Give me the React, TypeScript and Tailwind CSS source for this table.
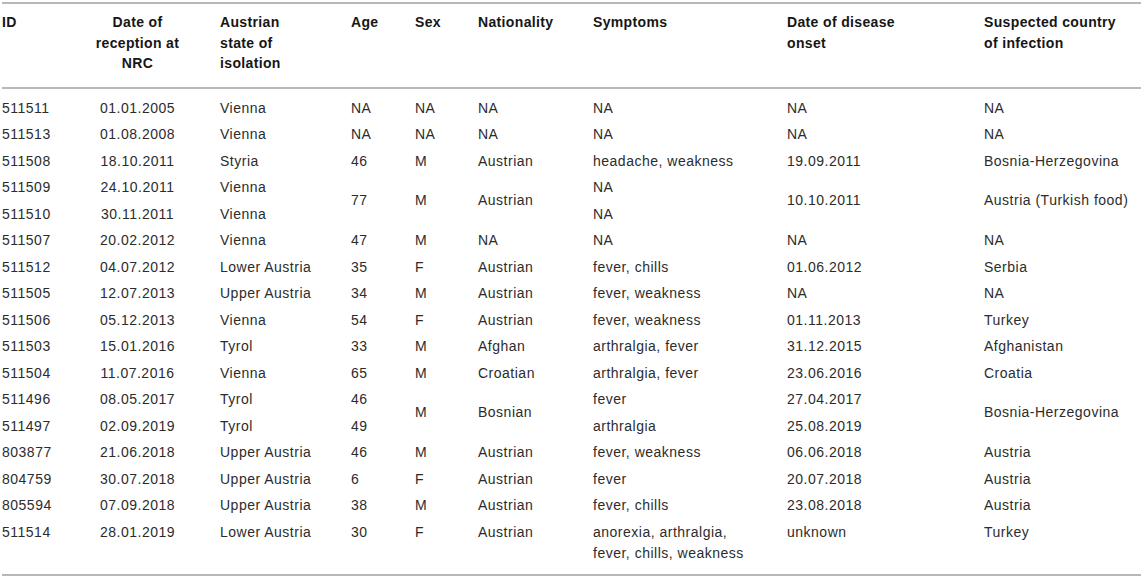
type Cell = { text: string; span?: number } | null;

// null = covered by a rowSpan cell above
const rows: Cell[][] = [
  [{ text: "511511" }, { text: "01.01.2005" }, { text: "Vienna" }, { text: "NA" }, { text: "NA" }, { text: "NA" }, { text: "NA" }, { text: "NA" }, { text: "NA" }],
  [{ text: "511513" }, { text: "01.08.2008" }, { text: "Vienna" }, { text: "NA" }, { text: "NA" }, { text: "NA" }, { text: "NA" }, { text: "NA" }, { text: "NA" }],
  [{ text: "511508" }, { text: "18.10.2011" }, { text: "Styria" }, { text: "46" }, { text: "M" }, { text: "Austrian" }, { text: "headache, weakness" }, { text: "19.09.2011" }, { text: "Bosnia-Herzegovina" }],
  [{ text: "511509" }, { text: "24.10.2011" }, { text: "Vienna" }, { text: "77", span: 2 }, { text: "M", span: 2 }, { text: "Austrian", span: 2 }, { text: "NA" }, { text: "10.10.2011", span: 2 }, { text: "Austria (Turkish food)", span: 2 }],
  [{ text: "511510" }, { text: "30.11.2011" }, { text: "Vienna" }, null, null, null, { text: "NA" }, null, null],
  [{ text: "511507" }, { text: "20.02.2012" }, { text: "Vienna" }, { text: "47" }, { text: "M" }, { text: "NA" }, { text: "NA" }, { text: "NA" }, { text: "NA" }],
  [{ text: "511512" }, { text: "04.07.2012" }, { text: "Lower Austria" }, { text: "35" }, { text: "F" }, { text: "Austrian" }, { text: "fever, chills" }, { text: "01.06.2012" }, { text: "Serbia" }],
  [{ text: "511505" }, { text: "12.07.2013" }, { text: "Upper Austria" }, { text: "34" }, { text: "M" }, { text: "Austrian" }, { text: "fever, weakness" }, { text: "NA" }, { text: "NA" }],
  [{ text: "511506" }, { text: "05.12.2013" }, { text: "Vienna" }, { text: "54" }, { text: "F" }, { text: "Austrian" }, { text: "fever, weakness" }, { text: "01.11.2013" }, { text: "Turkey" }],
  [{ text: "511503" }, { text: "15.01.2016" }, { text: "Tyrol" }, { text: "33" }, { text: "M" }, { text: "Afghan" }, { text: "arthralgia, fever" }, { text: "31.12.2015" }, { text: "Afghanistan" }],
  [{ text: "511504" }, { text: "11.07.2016" }, { text: "Vienna" }, { text: "65" }, { text: "M" }, { text: "Croatian" }, { text: "arthralgia, fever" }, { text: "23.06.2016" }, { text: "Croatia" }],
  [{ text: "511496" }, { text: "08.05.2017" }, { text: "Tyrol" }, { text: "46" }, { text: "M", span: 2 }, { text: "Bosnian", span: 2 }, { text: "fever" }, { text: "27.04.2017" }, { text: "Bosnia-Herzegovina", span: 2 }],
  [{ text: "511497" }, { text: "02.09.2019" }, { text: "Tyrol" }, { text: "49" }, null, null, { text: "arthralgia" }, { text: "25.08.2019" }, null],
  [{ text: "803877" }, { text: "21.06.2018" }, { text: "Upper Austria" }, { text: "46" }, { text: "M" }, { text: "Austrian" }, { text: "fever, weakness" }, { text: "06.06.2018" }, { text: "Austria" }],
  [{ text: "804759" }, { text: "30.07.2018" }, { text: "Upper Austria" }, { text: "6" }, { text: "F" }, { text: "Austrian" }, { text: "fever" }, { text: "20.07.2018" }, { text: "Austria" }],
  [{ text: "805594" }, { text: "07.09.2018" }, { text: "Upper Austria" }, { text: "38" }, { text: "M" }, { text: "Austrian" }, { text: "fever, chills" }, { text: "23.08.2018" }, { text: "Austria" }],
  [{ text: "511514" }, { text: "28.01.2019" }, { text: "Lower Austria" }, { text: "30" }, { text: "F" }, { text: "Austrian" }, { text: "anorexia, arthralgia,\nfever, chills, weakness" }, { text: "unknown" }, { text: "Turkey" }],
];

const widths = [83, 135, 131, 64, 63, 115, 194, 197, 157];

export default function App() {
  const last = rows.length - 1;
  return (
    <div className="min-h-screen bg-white px-[2px] pt-[2px] font-['Liberation_Sans',Arial,sans-serif] text-[14px]">
      <table className="w-[1139px] table-fixed border-collapse border-y-2 border-[#b8b8b8]">
        <colgroup>
          {widths.map((w, i) => (
            <col key={i} style={{ width: w }} />
          ))}
        </colgroup>
        <thead>
          <tr className="border-b-2 border-[#b8b8b8] align-top text-left font-bold tracking-[0.35px] text-[#161616] leading-[20.5px]">
            <th className="pt-2 pb-[13px]">ID</th>
            <th className="pt-2 pb-[13px] pr-[30px] text-center">
              Date of
              <br />
              reception at
              <br />
              NRC
            </th>
            <th className="pt-2 pb-[13px]">
              Austrian
              <br />
              state of
              <br />
              isolation
            </th>
            <th className="pt-2 pb-[13px]">Age</th>
            <th className="pt-2 pb-[13px]">Sex</th>
            <th className="pt-2 pb-[13px]">Nationality</th>
            <th className="pt-2 pb-[13px]">Symptoms</th>
            <th className="pt-2 pb-[13px]">
              Date of disease
              <br />
              onset
            </th>
            <th className="pt-2 pb-[13px]">
              Suspected country
              <br />
              of infection
            </th>
          </tr>
        </thead>
        <tbody className="text-[#2c2c2c] leading-[21.5px] tracking-[0.5px]">
          {rows.map((row, r) => (
            <tr key={r}>
              {row.map((cell, c) =>
                cell === null ? null : (
                  <td
                    key={c}
                    rowSpan={cell.span}
                    className={[
                      "whitespace-pre-line",
                      c === 1 ? "pr-[30px] text-center" : "",
                      cell.span ? "align-middle" : "align-top",
                      r === 0 ? "pt-[9px]" : "pt-[2.5px]",
                      r === last ? "pb-[9px]" : "pb-[2.5px]",
                    ].join(" ")}
                  >
                    {cell.text}
                  </td>
                )
              )}
            </tr>
          ))}
        </tbody>
      </table>
    </div>
  );
}
